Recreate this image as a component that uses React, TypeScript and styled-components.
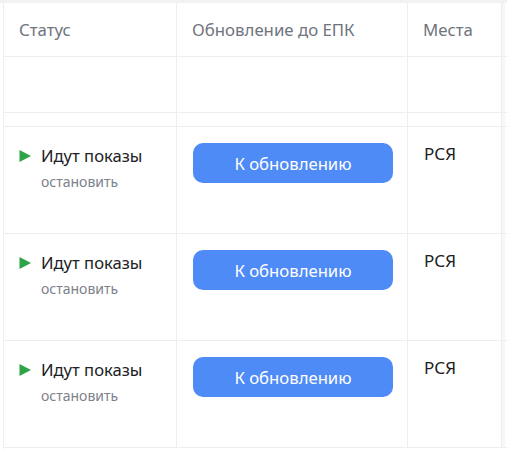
import styled, { createGlobalStyle } from "styled-components";

const Global = createGlobalStyle`
    html, body {
        margin: 0;
        padding: 0;
        background: #fff;
    }
    body {
        font-family: "Noto Sans", "Liberation Sans", sans-serif;
        color: #1f2024;
    }
`;

const line = "#eceef1";

const Page = styled.div`
    width: 507px;
    height: 449px;
    overflow: hidden;
    border-top: 3px solid #f1f2f4;
    box-sizing: border-box;
    display: flex;
`;

const Gutter = styled.div`
    flex: 0 0 3px;
    border-right: 1px solid ${line};
`;

const Table = styled.div`
    display: grid;
    grid-template-columns: 173px 231px 94px 3px 40px;
    grid-auto-rows: min-content;
    flex: 1 1 auto;
`;

const Cell = styled.div<{ $h: number; $last?: boolean; $edge?: boolean }>`
    height: ${p => p.$h}px;
    box-sizing: border-box;
    border-bottom: 1px solid ${line};
    border-right: ${p => (p.$last ? "none" : `1px solid ${line}`)};
    background: ${p => (p.$edge ? "#f6f7f9" : "#fff")};
    padding: 0 15px;
`;

const HeadCell = styled(Cell)`
    display: flex;
    align-items: center;
    padding-bottom: 1px;
    font-size: 16.8px;
    color: #70747d;
    white-space: nowrap;
`;

const BodyCell = styled(Cell)`
    padding-top: 16px;
`;

const Status = styled.div`
    display: flex;
    align-items: flex-start;
    gap: 10px;
    padding-top: 3px;
`;

const Play = styled.svg`
    width: 12px;
    height: 12px;
    margin-top: 4px;
    flex: 0 0 12px;
`;

const StatusText = styled.div`
    display: flex;
    flex-direction: column;
    gap: 7px;
`;

const Title = styled.span`
    font-size: 16.6px;
    line-height: 20px;
    color: #202124;
`;

const Stop = styled.span`
    font-size: 14px;
    line-height: 18px;
    color: #7c818b;
`;

const Button = styled.button`
    width: 200px;
    height: 40px;
    margin-left: 1px;
    border: none;
    border-radius: 10px;
    background: #4f8bf7;
    color: #fff;
    font-family: inherit;
    font-size: 16.7px;
    cursor: pointer;
`;

const Place = styled.div`
    font-size: 17px;
    line-height: 20px;
    padding-top: 1px;
    padding-left: 1px;
    color: #202124;
`;

const heads = ["Статус", "Обновление до ЕПК", "Места"];

const Row = () => (
    <>
        <BodyCell $h={107}>
            <Status>
                <Play viewBox="0 0 12 12">
                    <path d="M0.5 0 L12 6 L0.5 12 Z" fill="#2ca447" />
                </Play>
                <StatusText>
                    <Title>Идут показы</Title>
                    <Stop>остановить</Stop>
                </StatusText>
            </Status>
        </BodyCell>
        <BodyCell $h={107}>
            <Button>К обновлению</Button>
        </BodyCell>
        <BodyCell $h={107}>
            <Place>РСЯ</Place>
        </BodyCell>
        <BodyCell $h={107} $edge />
        <BodyCell $h={107} $last />
    </>
);

export default function App() {
    return (
        <>
            <Global />
            <Page>
                <Gutter />
                <Table>
                    {heads.map(h => (
                        <HeadCell key={h} $h={54}>{h}</HeadCell>
                    ))}
                    <HeadCell $h={54} $edge />
                    <HeadCell $h={54} $last />
                    {[0, 1, 2, 3, 4].map(i => (
                        <Cell key={"e" + i} $h={56} $edge={i === 3} $last={i === 4} />
                    ))}
                    {[0, 1, 2, 3, 4].map(i => (
                        <Cell key={"s" + i} $h={14} $edge={i === 3} $last={i === 4} />
                    ))}
                    <Row />
                    <Row />
                    <Row />
                </Table>
            </Page>
        </>
    );
}
